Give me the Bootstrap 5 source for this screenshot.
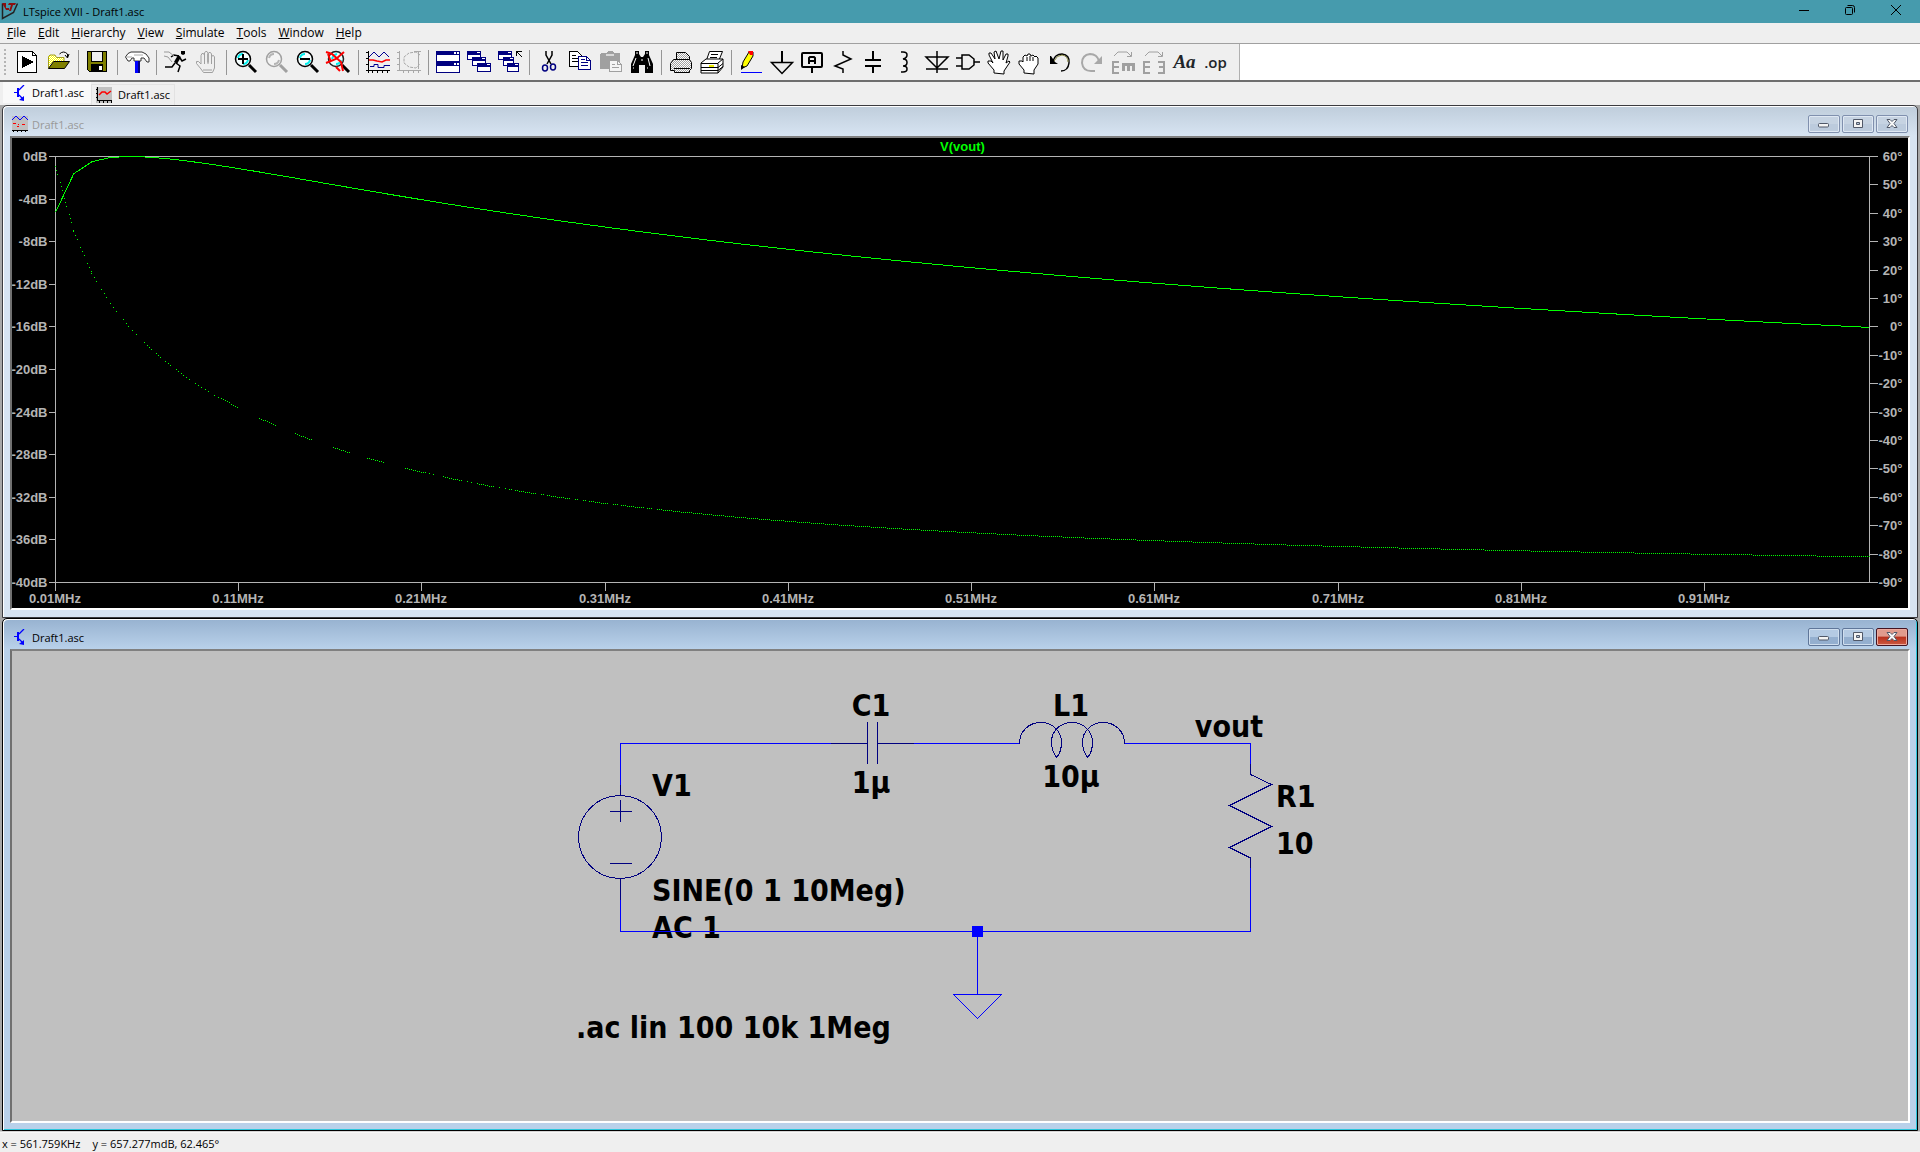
<!DOCTYPE html>
<html lang="en">
<head>
<meta charset="utf-8">
<meta name="viewport" content="width=device-width, initial-scale=1">
<title>LTspice XVII - Draft1.asc</title>
<link rel="stylesheet" href="https://cdn.jsdelivr.net/npm/bootstrap@5.3.0/dist/css/bootstrap.min.css">
<style>
  body { font-family: "Open Sans", "Noto Sans", sans-serif; font-size: 11px; line-height: 16px; color: #000; background: #efefef; }
  svg { display: block; overflow: visible; flex: none; }
  button { font: inherit; color: inherit; }
  .app-title { height: 23px; background: #469bad; padding-right: 1px; }
  .app-title h1 { font-size: 11px; line-height: 16px; font-weight: 400; margin: 4px 0 0 5px; }
  .sys-btn { width: 46px; height: 20px; }
  .menu-strip { height: 21px; padding-left: 1px; border-bottom: 1px solid #a0a0a0; }
  .menu-strip a { color: #000; font-size: 12px; padding: 2px 6px; }
  .tool-wrap { height: 38px; background: #fff; border-bottom: 2px solid #6e6e6e; }
  .tool-strip { background: #efefef; border-right: 1px solid #b0b0b0; padding: 0 8px 0 4px; }
  .grip { width: 2px; height: 26px; margin-right: 6px; background: repeating-linear-gradient(#b4b4b4 0 2px, transparent 2px 4px); }
  .tool-btn { width: 31px; height: 28px; padding: 2px 3px 2px 4px; }
  .tool-sep { width: 8px; height: 25px; background: linear-gradient(90deg, transparent 4px, #969696 4px 5px, transparent 5px); }
  .tool-text { font-family: "Liberation Serif", serif; font-weight: 700; font-style: italic; font-size: 19px; line-height: 24px; }
  .tool-op { font-weight: 600; font-size: 15px; line-height: 20px; }
  .doc-tabs { height: 23px; padding-left: 3px; }
  .doc-tab { height: 21px; color: #000; }
  .doc-tab.now { padding: 0 7px 0 9px; gap: 4px; background: #f9f9f9; }
  .doc-tab.rest { padding: 0 4px 0 4px; gap: 6px; border: 1px solid #e2e2e2; border-bottom: 0; margin-top: 2px; }
  .desk { padding: 0 2px; background: #a8a8a8; }
  .mdi { flex: 1 1 0; border: 1px solid #3c3c40; border-radius: 5px 5px 0 0; padding: 0 7px 7px; min-height: 0; box-shadow: inset 1px 1px 0 #fff; }
  .mdi.idle { background: linear-gradient(#bfcddb, #d7e4f2 30px); }
  .mdi.live { background: linear-gradient(#97b2d0, #b9d1ea 30px); border-color: #000; box-shadow: inset 1px 1px 0 #fff, inset -1px -1px 0 #2cc6dc; }
  .mdi-head { height: 30px; padding: 9px 2px 3px; }
  .mdi-head h2 { font-size: 11px; line-height: 16px; font-weight: 400; padding-top: 2px; }
  .mdi-ctl { gap: 2px; }
  .idle h2 { color: #999; }
  .mdi-btn { width: 32px; height: 18px; border: 1px solid #8090ae; border-radius: 2px; box-shadow: inset 0 0 0 1px #dfe8f3; background: linear-gradient(#c6d3e2 50%, #bccbdd 50%); }
  .live .mdi-btn { border-color: #5f7699; box-shadow: inset 0 0 0 1px #cfdeee; background: linear-gradient(#b4cae3 50%, #94afcf 50%); }
  .live .mdi-btn.shut { border-color: #431422; box-shadow: inset 0 0 0 1px #eeaa9e; background: linear-gradient(#e09b8d 45%, #b8301c 50%, #cc5a42); }
  .pane { border: 2px solid; border-color: #808080 #fff #fff #707070; min-height: 0; }
  .plot-pane { background: #000; }
  .plot-pane text { font: 700 13px "Liberation Sans", Arial, sans-serif; fill: #b4b4b4; }
  .plot-pane .trace-name { fill: #00ff00; }
  .sch-pane { background: #c0c0c0; }
  .sch-pane text { font: 700 30px "DejaVu Sans Condensed", "Noto Sans", sans-serif; fill: #000; }
  .status { height: 21px; border-top: 1px solid #d4d4d4; padding: 3px 2px 0; gap: 12px; box-shadow: inset 0 1px 0 #f8f8f8; }
</style>
<script src="https://cdn.jsdelivr.net/npm/bootstrap@5.3.0/dist/js/bootstrap.bundle.min.js"></script>
</head>
<body class="d-flex flex-column vh-100 overflow-hidden">

<svg width="0" height="0" class="position-absolute" aria-hidden="true">
  <defs>
    <pattern id="dither" width="2" height="2" patternUnits="userSpaceOnUse"><rect width="2" height="2" fill="#fff"/><path d="M0 0h1v1H0zM1 1h1v1H1z" fill="#a0a0a0"/></pattern>
    <pattern id="folder" width="2" height="2" patternUnits="userSpaceOnUse"><rect width="2" height="2" fill="#fff"/><path d="M0 0h1v1H0zM1 1h1v1H1z" fill="#ff0"/></pattern>
    <symbol id="i-sch" viewBox="0 0 16 16"><path d="M2 7h4v1H2zM5 3h2v9H5z" fill="#00f"/><path d="M7 5l5-5M7 10l4 4" fill="none" stroke="#00f" stroke-width="1.300"/><path d="M12 16v-5l-5 4z" fill="#00f"/></symbol>
    <symbol id="i-min" viewBox="0 0 12 10"><rect x=".5" y="4.500" width="10" height="3.500" rx="1" fill="#f4f4f4" stroke="#505868"/></symbol>
    <symbol id="i-max" viewBox="0 0 12 10"><path d="M1.500.5h9v8h-9z" fill="#f4f4f4" stroke="#505868"/><path d="M4.500 3.500h3v2h-3z" fill="#b4c6da" stroke="#505868"/></symbol>
    <symbol id="i-x" viewBox="0 0 12 10"><path d="M1 .5h3l2 2 2-2h3L8 4.500l3 4H8l-2-2-2 2H1l3-4z" fill="#f8f8f8" stroke="#505868"/></symbol>
    <symbol id="i-hand" viewBox="0 0 24 24"><path d="M8.500 22.500L6 19l-4.500-5.500v-2h2L6 14V5.500l1-2h1.500l1 2v7V3l1-1.500H12L13 3v9.500V4l1-1.500h1.500l1 1.500v9-6l1-1.500h1l1 1.500V18l-2 4.500z" fill="#efefef" stroke="#a0a0a0"/><path d="M9.500 5v9M13 4v10M16.500 6v8M8 20h9" stroke="#a0a0a0"/></symbol>
  </defs>
</svg>

<header class="app-title d-flex align-items-start">
  <svg width="18" height="20" viewBox="0 0 18 20"><path d="M2.500 3.500v15l11-6 4-9" fill="none" stroke="#222" stroke-width="1.500"/><path d="M2 3h4v5h3v2H6zM9 3h7l-1 2h-2l-2 6h-2l2-6H8z" fill="#8c1010"/></svg>
  <h1 class="flex-grow-1">LTspice XVII - Draft1.asc</h1>
  <button class="sys-btn btn border-0 rounded-0 p-0 d-flex align-items-center justify-content-center" aria-label="Minimize"><svg width="10" height="10"><path d="M0 5.500h10" stroke="#000"/></svg></button>
  <button class="sys-btn btn border-0 rounded-0 p-0 d-flex align-items-center justify-content-center" aria-label="Restore"><svg width="10" height="10" fill="none" stroke="#000"><rect x=".5" y="2.500" width="7" height="7" rx="1"/><path d="M2.500.5h5q2 0 2 2v5"/></svg></button>
  <button class="sys-btn btn border-0 rounded-0 p-0 d-flex align-items-center justify-content-center" aria-label="Close"><svg width="10" height="10"><path d="M0 0l10 10M10 0L0 10" stroke="#000"/></svg></button>
</header>

<nav class="menu-strip d-flex" aria-label="Menu">
  <a href="#" class="text-decoration-none"><u>F</u>ile</a>
  <a href="#" class="text-decoration-none"><u>E</u>dit</a>
  <a href="#" class="text-decoration-none"><u>H</u>ierarchy</a>
  <a href="#" class="text-decoration-none"><u>V</u>iew</a>
  <a href="#" class="text-decoration-none"><u>S</u>imulate</a>
  <a href="#" class="text-decoration-none"><u>T</u>ools</a>
  <a href="#" class="text-decoration-none"><u>W</u>indow</a>
  <a href="#" class="text-decoration-none"><u>H</u>elp</a>
</nav>

<div class="tool-wrap d-flex">
<div class="tool-strip d-flex align-items-center" role="toolbar" aria-label="Tools">
  <span class="grip"></span>
  <button class="tool-btn btn border-0" aria-label="Run file"><svg width="24" height="24" shape-rendering="crispEdges"><path d="M1.500 1.500h15l4 4v17h-19z" fill="#fff" stroke="#000"/><path d="M16.500 1.500v4h4" fill="none" stroke="#000"/><path d="M6 6l12 6-12 6z"/></svg></button>
  <button class="tool-btn btn border-0" aria-label="Open"><svg width="24" height="24"><path d="M1.500 18V6.500L3 5h5l1.500 2.500H17v5" fill="url(#folder)" stroke="#a09c20"/><path d="M1.500 18.500l5-7h16l-5 7z" fill="#808000" stroke="#000"/><path d="M12.500 4q4-4 8 0v3M18 5l2.500 3L22 4" fill="none" stroke="#000"/></svg></button>
  <span class="tool-sep"></span>
  <button class="tool-btn btn border-0" aria-label="Save"><svg width="24" height="24" shape-rendering="crispEdges"><path d="M1.500 1.500h19v20h-17l-2-2z" fill="#808000" stroke="#000"/><path d="M5 2h12v9H5z" fill="#efefef"/><path d="M5 14h12v7H5z"/><path d="M13 16h3v4h-3z" fill="#fff"/><path d="M5.500 2v9h11V2" fill="none" stroke="#000"/></svg></button>
  <span class="tool-sep"></span>
  <button class="tool-btn btn border-0" aria-label="Control panel"><svg width="24" height="24"><path d="M.5 7L3 3.500 6 2h11l4 2 3 4v4h-2l-3-4h-3v3H9V8H7l-2 3H3z" fill="#fff" stroke="#333"/><path d="M2 7h5M9 5h9" stroke="#aaa" fill="none"/><path d="M10 11h4v12h-4z" fill="#00f"/><path d="M13 11h2v12h-2z" fill="#000080"/></svg></button>
  <span class="tool-sep"></span>
  <button class="tool-btn btn border-0" aria-label="Run"><svg width="24" height="24" fill="none" stroke="#000" stroke-width="1.500"><path d="M17 1h4v3l-2 1-2-1z" fill="#000" stroke="none"/><path d="M12 13l4 3-2 6M11 13l-3 4H1"/><path d="M15 6l-5-1-3 2M16 8l2 3 4-2"/><path d="M14 5l3 2-4 7-3-2z" fill="#000" stroke="none"/><path d="M0 2h5l5 4M0 6l4 1 4 5" stroke="#999" stroke-width="1"/></svg></button>
  <button class="tool-btn btn border-0" aria-label="Halt"><svg width="24" height="24"><use href="#i-hand"/></svg></button>
  <span class="tool-sep"></span>
  <button class="tool-btn btn border-0" aria-label="Zoom in"><svg width="24" height="24"><circle cx="9" cy="9" r="7.500" fill="#f6ffff" stroke="#000" stroke-width="1.500"/><path d="M4 8q1-4 5-4M14 10q-1 4-5 4" stroke="#0ee" fill="none" stroke-width="2"/><path d="M15 15l7 7" stroke="#000" stroke-width="3"/><path d="M4 9h10M9 4v10" stroke="#000" stroke-width="2"/></svg></button>
  <button class="tool-btn btn border-0" aria-label="Pan"><svg width="24" height="24"><circle cx="9" cy="9" r="7.500" fill="#f4f4f4" stroke="#a0a0a0" stroke-width="1.500"/><path d="M4 8q1-4 5-4M14 10q-1 4-5 4" stroke="#b4b4b4" fill="none" stroke-width="2"/><path d="M15 15l7 7" stroke="#a0a0a0" stroke-width="3"/></svg></button>
  <button class="tool-btn btn border-0" aria-label="Zoom back"><svg width="24" height="24"><circle cx="9" cy="9" r="7.500" fill="#f6ffff" stroke="#000" stroke-width="1.500"/><path d="M4 8q1-4 5-4M14 10q-1 4-5 4" stroke="#0ee" fill="none" stroke-width="2"/><path d="M15 15l7 7" stroke="#000" stroke-width="3"/><path d="M4 9h10" stroke="#000" stroke-width="2"/></svg></button>
  <button class="tool-btn btn border-0" aria-label="Zoom full extents"><svg width="24" height="24"><circle cx="9" cy="9" r="7.500" fill="#e8ffff" stroke="#222" stroke-width="1.500"/><path d="M5 9q1-4 5-5M14 10q-1 4-5 4" stroke="#0ee" fill="none" stroke-width="2"/><path d="M15 15l7 7" stroke="#000" stroke-width="3"/><path d="M-1 2l6 2 9 8 2 9M17 2L9 9-1 13M1 4l3 8M9 17l4 4" stroke="#f00" stroke-width="2" fill="none"/></svg></button>
  <span class="tool-sep"></span>
  <button class="tool-btn btn border-0" aria-label="Autorange"><svg width="24" height="24" fill="none"><path d="M2.500 1v19.500H24M0 2.500h2M0 8.500h2M0 14.500h2M6.500 21v2M11.500 21v2M16.500 21v2M21.500 21v2M0 20.500h2M2.500 21v2" stroke="#000" shape-rendering="crispEdges"/><path d="M3 7l5-5 5 5 5-5 5 5M4 16.500h4v-2h4v3h6v-2h6" stroke="#000090"/><path d="M3 10h4l4 1 5 1 4-2h4" stroke="#f00" stroke-width="1.500"/></svg></button>
  <button class="tool-btn btn border-0" aria-label="Visible traces"><svg width="24" height="24" fill="none" stroke="#a8a8a8"><path d="M2.500 1v19.500H24M0 2.500h2M0 8.500h2M0 14.500h2M6.500 21v2M11.500 21v2M16.500 21v2M21.500 21v2M0 20.500h2" shape-rendering="crispEdges"/><path d="M21.500 1v18M17 1.500h7"/><path d="M23 5l-4-3-7 1-5 4v6l5 4 7 1 4-4" stroke-dasharray="3 1"/></svg></button>
  <span class="tool-sep"></span>
  <button class="tool-btn btn border-0" aria-label="Tile windows"><svg width="24" height="24" shape-rendering="crispEdges"><path d="M0 1h24v11H0zM0 12h24v11H0z" fill="#000080"/><path d="M1 5h22v6H1zM1 16h22v6H1z" fill="#fff"/><path d="M18 2h2v2h-2zM21 2h2v2h-2zM18 13h2v2h-2zM21 13h2v2h-2z" fill="#fff"/></svg></button>
  <button class="tool-btn btn border-0" aria-label="Cascade windows"><svg width="24" height="24" shape-rendering="crispEdges" stroke="#000080" fill="#fff"><path d="M.5 1.500h13v8H.5zM5.500 7.500h13v8h-13zM10.500 13.500h13v8h-13z"/><path d="M0 3h14M5 9h14M10 15h14" stroke-width="3"/><path d="M10 2.500h3M15 8.500h3M20 14.500h3" stroke="#fff"/></svg></button>
  <button class="tool-btn btn border-0" aria-label="Close all windows"><svg width="24" height="24" shape-rendering="crispEdges" stroke="#000080" fill="#fff"><path d="M.5 1.500h13v8H.5zM5.500 7.500h10v8h-10zM9.500 13.500h11v8h-11z"/><path d="M0 3h14M5 9h11M9 15h12" stroke-width="3"/><path d="M10 2.500h3M12 8.500h3M17 14.500h3" stroke="#fff"/><path d="M18.500 6V1.500H24M19 2l5 5" fill="none" stroke="#000"/></svg></button>
  <span class="tool-sep"></span>
  <button class="tool-btn btn border-0" aria-label="Cut"><svg width="24" height="24" fill="none"><path d="M9 1v4l5 9M15 1v4l-5 9" stroke="#000" stroke-width="1.500"/><ellipse cx="8" cy="18" rx="2.500" ry="3" stroke="#000080" stroke-width="1.500"/><ellipse cx="16" cy="17" rx="2.500" ry="3" stroke="#000080" stroke-width="1.500"/></svg></button>
  <button class="tool-btn btn border-0" aria-label="Copy"><svg width="24" height="24" shape-rendering="crispEdges"><path d="M1.500 1.500h8l4 4v11h-12z" fill="#fff" stroke="#000"/><path d="M4 5.500h4M4 8.500h7M4 11.500h7" stroke="#000"/><path d="M10.500 6.500h8l4 4v9h-12z" fill="#fff" stroke="#000080"/><path d="M18.500 6.500v4h4M13 9.500h4M13 12.500h7M13 15.500h7" fill="none" stroke="#000080"/></svg></button>
  <button class="tool-btn btn border-0" aria-label="Paste"><svg width="24" height="24" shape-rendering="crispEdges"><path d="M1 4l1-1h5l2-2h4l2 2h5l1 1v15H1z" fill="#a0a0a0"/><path d="M7 4h8v2H7z" fill="#d8d8d8"/><path d="M10.500 10.500h8l4 4v7h-12z" fill="#f4f4f4" stroke="#a0a0a0"/><path d="M18.500 11v3.500h4M13 14.500h3M13 17.500h7" fill="none" stroke="#a0a0a0"/></svg></button>
  <button class="tool-btn btn border-0" aria-label="Find"><svg width="24" height="24"><path d="M5 1h4v3l2 3h2l2-3V1h4v4l4 9v9h-8v-8H9v8H1v-9l4-9z"/><path d="M6 3h2M16 3h2M6 8l-3 8M18 8l2 8M11 10h2M3 18h1M17 18h1" stroke="#fff"/></svg></button>
  <span class="tool-sep"></span>
  <button class="tool-btn btn border-0" aria-label="Print"><svg width="24" height="24"><path d="M7.500 10V2.500h9l4 4V10" fill="url(#dither)" stroke="#000"/><path d="M1.500 13.500l3-4h16l2 3v6l-2 2v2h-15v-2h-4z" fill="url(#dither)" stroke="#000"/><path d="M5 18.500h16" stroke="#000"/></svg></button>
  <button class="tool-btn btn border-0" aria-label="Print setup"><svg width="24" height="24"><path d="M6.500 10l3-8.500h13L19 10z" fill="#fff" stroke="#000"/><path d="M11 4.500h7M10 7.500h7" stroke="#000"/><path d="M1 13l5-4h17v8l-5 6H1z" fill="#fff" stroke="#000"/><path d="M1 13.500h17V23M18 13l5-4M1 17.500h17l5-4M1 20.500h17l5-4" fill="none" stroke="#000"/><path d="M9 15h5v2H9z" fill="#ee0"/></svg></button>
  <span class="tool-sep"></span>
  <button class="tool-btn btn border-0" aria-label="Wire"><svg width="24" height="24"><path d="M3 18l1-6 6-10h4v4l-6 10z" fill="#ff0" stroke="#000"/><path d="M9 1h5v4l-3 0z" fill="#f00"/><path d="M2 15l4 2-4 3z"/><path d="M2 22.500h21" stroke="#00f"/></svg></button>
  <button class="tool-btn btn border-0" aria-label="Ground"><svg width="24" height="24" fill="none" stroke="#000"><path d="M12 1v12" stroke-width="2"/><path d="M1.500 12.500h21l-10.500 11z" stroke-width="1.500"/></svg></button>
  <button class="tool-btn btn border-0" aria-label="Label net"><svg width="24" height="24" fill="none" stroke="#000" stroke-width="2"><rect x="1" y="3" width="20" height="14" rx="1"/><path d="M11 17v6"/><path d="M8 14V8l1-1h4l1 1v6M8 11h6"/></svg></button>
  <button class="tool-btn btn border-0" aria-label="Resistor"><svg width="24" height="24" fill="none" stroke="#000" stroke-width="1.500"><path d="M11 1v4l8 4-16 7 8 3v4"/></svg></button>
  <button class="tool-btn btn border-0" aria-label="Capacitor"><svg width="24" height="24" stroke="#000" stroke-width="2"><path d="M10 1v9M10 16v7"/><path d="M2 10h16M2 16h16"/></svg></button>
  <button class="tool-btn btn border-0" aria-label="Inductor"><svg width="24" height="24" fill="none" stroke="#000" stroke-width="1.500"><path d="M7 2h2q4 0 4 3t-4 4q4 0 4 3.500T9 16q4 0 4 3t-4 3H7"/></svg></button>
  <button class="tool-btn btn border-0" aria-label="Diode"><svg width="24" height="24" fill="none" stroke="#000" stroke-width="1.500"><path d="M12 1v22M1 7h22L12 18zM1 19h22"/></svg></button>
  <button class="tool-btn btn border-0" aria-label="Component"><svg width="24" height="24" fill="none" stroke="#000" stroke-width="1.500"><path d="M6 5h7l5 4v6l-5 4H6zM0 8h6M0 16h6M18 12h6"/></svg></button>
  <button class="tool-btn btn border-0" aria-label="Move"><svg width="24" height="24"><path d="M7 23v-3l-6-7v-2h3l2 2-4-8V3h2l4 6-1-7 2-1 3 8 2-8h2v9l3-6h2v2l-2 7 3-2 1 1-6 9v3z" fill="#fff" stroke="#000"/></svg></button>
  <button class="tool-btn btn border-0" aria-label="Drag"><svg width="24" height="24"><path d="M6 23v-3l-5-6v-3h3l1 1V7l2-2 2 1 1-2h2l1 2 2-1 2 2 1-1 2 2v6l-4 6v4z" fill="#fff" stroke="#000"/><path d="M9 7v4M12 6v5M15 7v4" stroke="#000"/></svg></button>
  <button class="tool-btn btn border-0" aria-label="Undo"><svg width="24" height="24" fill="none"><path d="M4 11q2-7 9-7 8 1 7 9-1 8-8 8" stroke="#000" stroke-width="1.500"/><path d="M5 11q3-6 8-6 6 1 6 7" stroke="#884"/><path d="M1 6v8h8l-3-2-4-6z" fill="#000"/></svg></button>
  <button class="tool-btn btn border-0" aria-label="Redo"><svg width="24" height="24" fill="none"><path d="M19 11q-2-7-9-7-8 1-8 9 1 8 9 8h4" stroke="#a8a8a8" stroke-width="2"/><path d="M22 6v8h-8z" fill="#a8a8a8"/></svg></button>
  <button class="tool-btn btn border-0" aria-label="Rotate"><svg width="24" height="24" fill="none" stroke="#a0a0a0"><path d="M8 12H2v11h6M2 17h6" stroke-width="2"/><path d="M11 14.500h13M12.500 14v7M17.500 14v7M22.500 14v7" stroke-width="3"/><path d="M3 6l4-4h9l4 4M20.500 2v4.500H16"/></svg></button>
  <button class="tool-btn btn border-0" aria-label="Mirror"><svg width="24" height="24" fill="none" stroke="#a0a0a0"><path d="M8 12H2v11h6M2 17h6M16 12h6v11h-6M17 17h5" stroke-width="2"/><path d="M3 6l4-4h9l4 4M20.500 2v4.500H16"/></svg></button>
  <button class="tool-btn tool-text btn border-0 p-0 text-center">Aa</button>
  <button class="tool-btn tool-op btn border-0 p-0 text-center">.op</button>
</div>
</div>

<nav class="doc-tabs d-flex align-items-start" aria-label="Documents">
  <a href="#" class="doc-tab now d-flex align-items-center text-decoration-none"><svg width="16" height="16"><use href="#i-sch"/></svg><span>Draft1.asc</span></a>
  <a href="#" class="doc-tab rest d-flex align-items-center text-decoration-none"><svg width="16" height="16" shape-rendering="crispEdges"><path d="M0 0h16v16H0z" fill="#c0c0c0"/><path d="M1.500 0v13.500H16M0 2.500h1M0 6.500h1M0 10.500h1M3.500 14v2M7.500 14v2M11.500 14v2M15.500 14v2" stroke="#000" fill="none"/><path d="M3 8l3-3h3l2 2 4-3" stroke="#f00" fill="none" stroke-width="1.500" shape-rendering="auto"/></svg><span>Draft1.asc</span></a>
</nav>

<main class="desk flex-grow-1 d-flex flex-column">
  <section class="mdi idle d-flex flex-column">
    <div class="mdi-head d-flex align-items-center">
      <svg width="16" height="16" shape-rendering="crispEdges"><path d="M0 0h16v14H0z" fill="#c0c0c0"/><path d="M0 4l4-4 4 4 4-4 4 4" stroke="#00f" fill="none"/><path d="M1 7.500h3M6 8.500h1M10 8.500h3M5 10.500h2" stroke="#f00"/><path d="M0 14.500h16M1.500 15v1M5.500 15v1M9.500 15v1M13.500 15v1" stroke="#000"/></svg>
      <h2 class="m-0 ms-1 flex-grow-1">Draft1.asc</h2>
      <div class="mdi-ctl d-flex">
        <button class="mdi-btn p-0 d-flex align-items-center justify-content-center" aria-label="Minimize"><svg width="12" height="10"><use href="#i-min"/></svg></button>
        <button class="mdi-btn p-0 d-flex align-items-center justify-content-center" aria-label="Maximize"><svg width="12" height="10"><use href="#i-max"/></svg></button>
        <button class="mdi-btn p-0 d-flex align-items-center justify-content-center" aria-label="Close"><svg width="12" height="10"><use href="#i-x"/></svg></button>
      </div>
    </div>
    <div class="pane plot-pane flex-grow-1 overflow-hidden"><svg id="plot" width="100%" height="100%" role="img" aria-label="V(vout) magnitude and phase"></svg></div>
  </section>

  <section class="mdi live d-flex flex-column">
    <div class="mdi-head d-flex align-items-center">
      <svg width="16" height="16"><use href="#i-sch"/></svg>
      <h2 class="m-0 ms-1 flex-grow-1">Draft1.asc</h2>
      <div class="mdi-ctl d-flex">
        <button class="mdi-btn p-0 d-flex align-items-center justify-content-center" aria-label="Minimize"><svg width="12" height="10"><use href="#i-min"/></svg></button>
        <button class="mdi-btn p-0 d-flex align-items-center justify-content-center" aria-label="Maximize"><svg width="12" height="10"><use href="#i-max"/></svg></button>
        <button class="mdi-btn shut p-0 d-flex align-items-center justify-content-center" aria-label="Close"><svg width="12" height="10"><use href="#i-x"/></svg></button>
      </div>
    </div>
    <div class="pane sch-pane flex-grow-1 overflow-hidden">
      <svg width="100%" height="100%" viewBox="12 651 1896 470" fill="none" stroke-width="1" role="img" aria-label="Series RLC schematic">
        <g stroke="none">
          <text x="871" y="716" text-anchor="middle">C1</text>
          <text x="871" y="793" text-anchor="middle">1µ</text>
          <text x="1071" y="716" text-anchor="middle">L1</text>
          <text x="1071" y="787" text-anchor="middle">10µ</text>
          <text x="1229" y="737" text-anchor="middle">vout</text>
          <text x="652" y="796">V1</text>
          <text x="652" y="901">SINE(0 1 10Meg)</text>
          <text x="652" y="938">AC 1</text>
          <text x="576" y="1038">.ac lin 100 10k 1Meg</text>
          <text x="1276" y="807">R1</text>
          <text x="1276" y="854">10</text>
        </g>
        <g stroke="#0000ff" shape-rendering="crispEdges">
          <path d="M620.500 786v-42.500H831M914 743.500h105.500M1124 743.500h126.500V764M1250.500 868v63.500h-630V900"/>
          <path d="M977.500 931v63M953 994.500h49"/>
          <path d="M953.500 994.500l24 24 24-24"/>
          <path d="M972 926h11v11h-11z" fill="#0000ff" stroke="none"/>
        </g>
        <g stroke="#000080" shape-rendering="crispEdges">
          <path d="M831 743.500h36.500M877.500 743.500H914M867.500 722v42M877.500 722v42"/>
          <path d="M620.500 785v10M620.500 879v21M610 811.500h22M620.500 800v22M610 863.500h22"/>
          <path d="M1250.500 764v10.500l21 10-42 21 42 21-42 21 21 10.500v10"/>
          <circle cx="620" cy="837" r="41.500"/>
          <path d="M1019.500 743.500C1019.500 731 1029 722.500 1041 722.500C1053 722.500 1061.500 732 1061.500 742C1061.500 749 1059 755 1056 758M1057 758C1054 754 1051.500 749 1051.500 742C1051.500 731 1060 722.500 1072 722.500C1084 722.500 1092.500 732 1092.500 742C1092.500 749 1090 755 1087 758M1088 758C1085 754 1082.500 749 1082.500 742C1082.500 731 1092 722.500 1103 722.500C1115 722.500 1124.500 731 1124.500 743.500"/>
        </g>
      </svg>
    </div>
  </section>
</main>

<footer class="status d-flex align-items-center">
  <span>x = 561.759KHz</span>
  <span>y = 657.277mdB, 62.465°</span>
</footer>

<script>
  // AC response of the series RLC divider: 100 linear points from 10 kHz to 1 MHz.
  const R = 10, L = 10e-6, C = 1e-6, F0 = 10e3, F1 = 1e6, N = 100;
  const svg = document.getElementById('plot');

  function drawPlot() {
    const w = svg.clientWidth, h = svg.clientHeight;
    const left = 43.5, right = w - 38.5, top = 18.5, bottom = h - 25.5;
    const axis = [], labels = [];
    const xAt = f => left + (f - F0) / (F1 - F0) * (right - left);
    const yDb = d => top + -d / 40 * (bottom - top);
    const yDeg = p => top + (60 - p) / 150 * (bottom - top);
    const snap = v => Math.floor(v) + 0.5;

    axis.push(`M${left - 7} ${top}H${right + 8}M${left - 7} ${bottom}H${right + 8}M${left} ${top}V${bottom + 8}M${right} ${top}V${bottom}`);
    for (let d = 0; d >= -40; d -= 4) {
      const y = snap(yDb(d));
      axis.push(`M${left - 7} ${y}H${left}`);
      labels.push(`<text x="${left - 8}" y="${y + 4.5}" text-anchor="end">${d}dB</text>`);
    }
    for (let p = 60; p >= -90; p -= 10) {
      const y = snap(yDeg(p));
      axis.push(`M${right} ${y}H${right + 8}`);
      labels.push(`<text x="${right + 33}" y="${y + 4.5}" text-anchor="end">${p}°</text>`);
    }
    for (let f = F0; f < F1; f += 1e5) {
      const x = snap(xAt(f));
      axis.push(`M${x} ${bottom}V${bottom + 8}`);
      labels.push(`<text x="${x - 0.5}" y="${bottom + 20.5}" text-anchor="middle">${(f / 1e6).toFixed(2)}MHz</text>`);
    }

    const mag = [], phase = [];
    for (let i = 0; i < N; i++) {
      const f = F0 + i * (F1 - F0) / (N - 1), om = 2 * Math.PI * f, X = om * L - 1 / (om * C);
      mag.push([xAt(f), yDb(-10 * Math.log10(1 + X * X / R / R))]);
      phase.push([xAt(f), yDeg(-Math.atan2(X, R) * 180 / Math.PI)]);
    }

    let dots = '', n = 0, last = null, hold = 0;
    for (let i = 1; i < N; i++) {
      const [x0, y0] = phase[i - 1], [x1, y1] = phase[i];
      const slope = (y1 - y0) / (x1 - x0);
      if (slope > 0.55) {
        const step = slope > 1 ? 4 : 2;
        for (let y = Math.round(y0), k = 0; y < y1; y += step, k++) {
          if (k % 4 === 3) continue;
          const x = Math.floor(x0 + (y - y0) / slope);
          dots += `M${x} ${y}h1v1h-1z`;
        }
        continue;
      }
      for (let x = Math.round(x0); x < Math.round(x1); x++) {
        const y = Math.floor(y0 + (x - x0) * slope);
        const stepped = last !== null && y !== last;
        n += 1;
        if (stepped && slope > 0.1 && i % 2) hold = 3;
        if (n % 2 === 0 && hold <= 0) dots += `M${x} ${y}h1v1h-1z`;
        hold--;
        last = y;
      }
    }

    svg.innerHTML =
      `<path d="${axis.join('')}" stroke="#b4b4b4" fill="none" shape-rendering="crispEdges"/>` +
      labels.join('') +
      `<text class="trace-name" x="${(left + right) / 2}" y="13" text-anchor="middle">V(vout)</text>` +
      `<polyline points="${mag.map(p => p.join()).join(' ')}" stroke="#00ff00" fill="none" shape-rendering="crispEdges"/>` +
      `<path d="${dots}" fill="#00ff00" shape-rendering="crispEdges"/>`;
  }
  drawPlot();
  window.addEventListener('resize', drawPlot);
</script>
</body>
</html>
